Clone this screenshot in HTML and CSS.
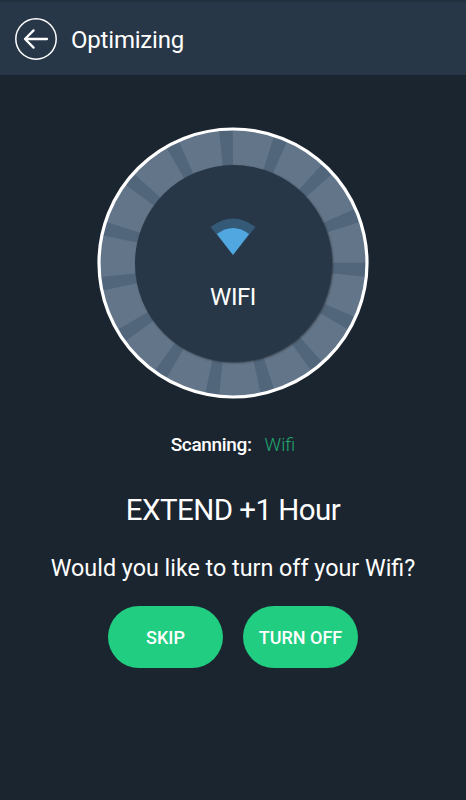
FILE: index.html
```html
<!DOCTYPE html>
<html lang="en">
<head>
  <meta charset="UTF-8">
  <title>Optimizing</title>
  <link rel="stylesheet" href="styles.css">
</head>
<body>
  <header class="topbar">
    <svg class="back" viewBox="0 0 42 42">
      <circle cx="21" cy="21" r="20.2" stroke-width="1.5"/>
      <path d="M10 21H32M18.6 12.4L10 21L18.6 29.6" stroke-width="2.3"/>
    </svg>
    <h1 class="title">Optimizing</h1>
  </header>

  <main class="content">
    <div class="dial">
      <svg class="ring" viewBox="0 0 272 272">
        <circle class="ring-base" cx="136" cy="136" r="134"/>
        <circle class="ring-ticks" cx="136" cy="136" r="115" pathLength="360" transform="rotate(-96 136 136)"/>
        <circle class="ring-edge" cx="136" cy="136" r="134"/>
      </svg>
      <div class="dial-inner">
        <svg class="wifi" viewBox="0 0 46 37">
          <path class="wifi-back" d="M23 37L0.5 9Q23 -8 45.5 9Z"/>
          <path class="wifi-front" d="M23 37L6.9 16Q23 4 39.1 16Z"/>
        </svg>
        <span class="dial-label">WIFI</span>
      </div>
    </div>

    <p class="status"><span class="status-label">Scanning:</span> <span class="status-value">Wifi</span></p>
    <h2 class="extend">EXTEND +1 Hour</h2>
    <p class="question">Would you like to turn off your Wifi?</p>

    <div class="actions">
      <button class="btn">SKIP</button>
      <button class="btn">TURN OFF</button>
    </div>
  </main>
</body>
</html>
```

FILE: styles.css
```css
* {
  margin: 0;
  padding: 0;
  box-sizing: border-box;
}

body {
  height: 800px;
  background-color: #1b2530;
  color: #fff;
  font-family: Roboto, sans-serif;
  overflow: hidden;
}

.topbar {
  display: flex;
  align-items: center;
  height: 75px;
  padding: 0 15px;
  gap: 14px;
  background-color: #283747;
  border-top: 2px solid #23313f;
}

.back {
  width: 42px;
  height: 42px;
  fill: none;
  stroke: #fff;
  stroke-linecap: round;
  stroke-linejoin: round;
}

.title {
  padding-top: 2px;
  font-size: 24px;
  font-weight: 400;
  line-height: 28px;
  letter-spacing: -0.2px;
}

.content {
  display: flex;
  flex-direction: column;
  align-items: center;
  padding-top: 52px;
}

.dial {
  display: grid;
  place-items: center;
  width: 272px;
  height: 272px;
}

.ring,
.dial-inner {
  grid-area: 1 / 1;
}

.ring {
  width: 272px;
  height: 272px;
}

.ring-base {
  fill: #637589;
}

.ring-ticks {
  fill: none;
  stroke: #51667b;
  stroke-width: 36;
  stroke-dasharray: 6 18;
}

.ring-edge {
  fill: none;
  stroke: #fff;
  stroke-width: 3.2;
}

.dial-inner {
  display: flex;
  flex-direction: column;
  align-items: center;
  width: 197px;
  height: 197px;
  padding-top: 53px;
  border-radius: 50%;
  background-color: #283747;
  box-shadow: 1px 1px 2px rgba(40, 48, 56, 0.8);
}

.wifi {
  width: 46px;
  height: 37px;
}

.wifi-back {
  fill: #345a78;
}

.wifi-front {
  fill: #51a8e1;
}

.dial-label {
  margin-top: 28px;
  font-size: 24px;
  line-height: 28px;
  letter-spacing: -0.4px;
}

.status {
  display: flex;
  align-items: baseline;
  gap: 13px;
  height: 23px;
  margin-top: 34px;
  font-size: 19px;
  line-height: 23px;
}

.status-label {
  font-weight: 500;
  letter-spacing: -0.35px;
}

.status-value {
  color: #22a870;
  font-size: 18.5px;
  font-weight: 300;
}

.extend {
  margin-top: 36px;
  font-size: 29.5px;
  font-weight: 400;
  line-height: 36px;
  letter-spacing: -0.55px;
}

.question {
  margin-top: 26px;
  font-size: 23.3px;
  line-height: 28px;
}

.actions {
  display: flex;
  gap: 20px;
  margin-top: 24px;
}

.btn {
  width: 115px;
  height: 62px;
  border: none;
  border-radius: 31px;
  background-color: #21cd81;
  color: #fff;
  font-family: inherit;
  font-size: 18px;
  font-weight: 500;
}
```
